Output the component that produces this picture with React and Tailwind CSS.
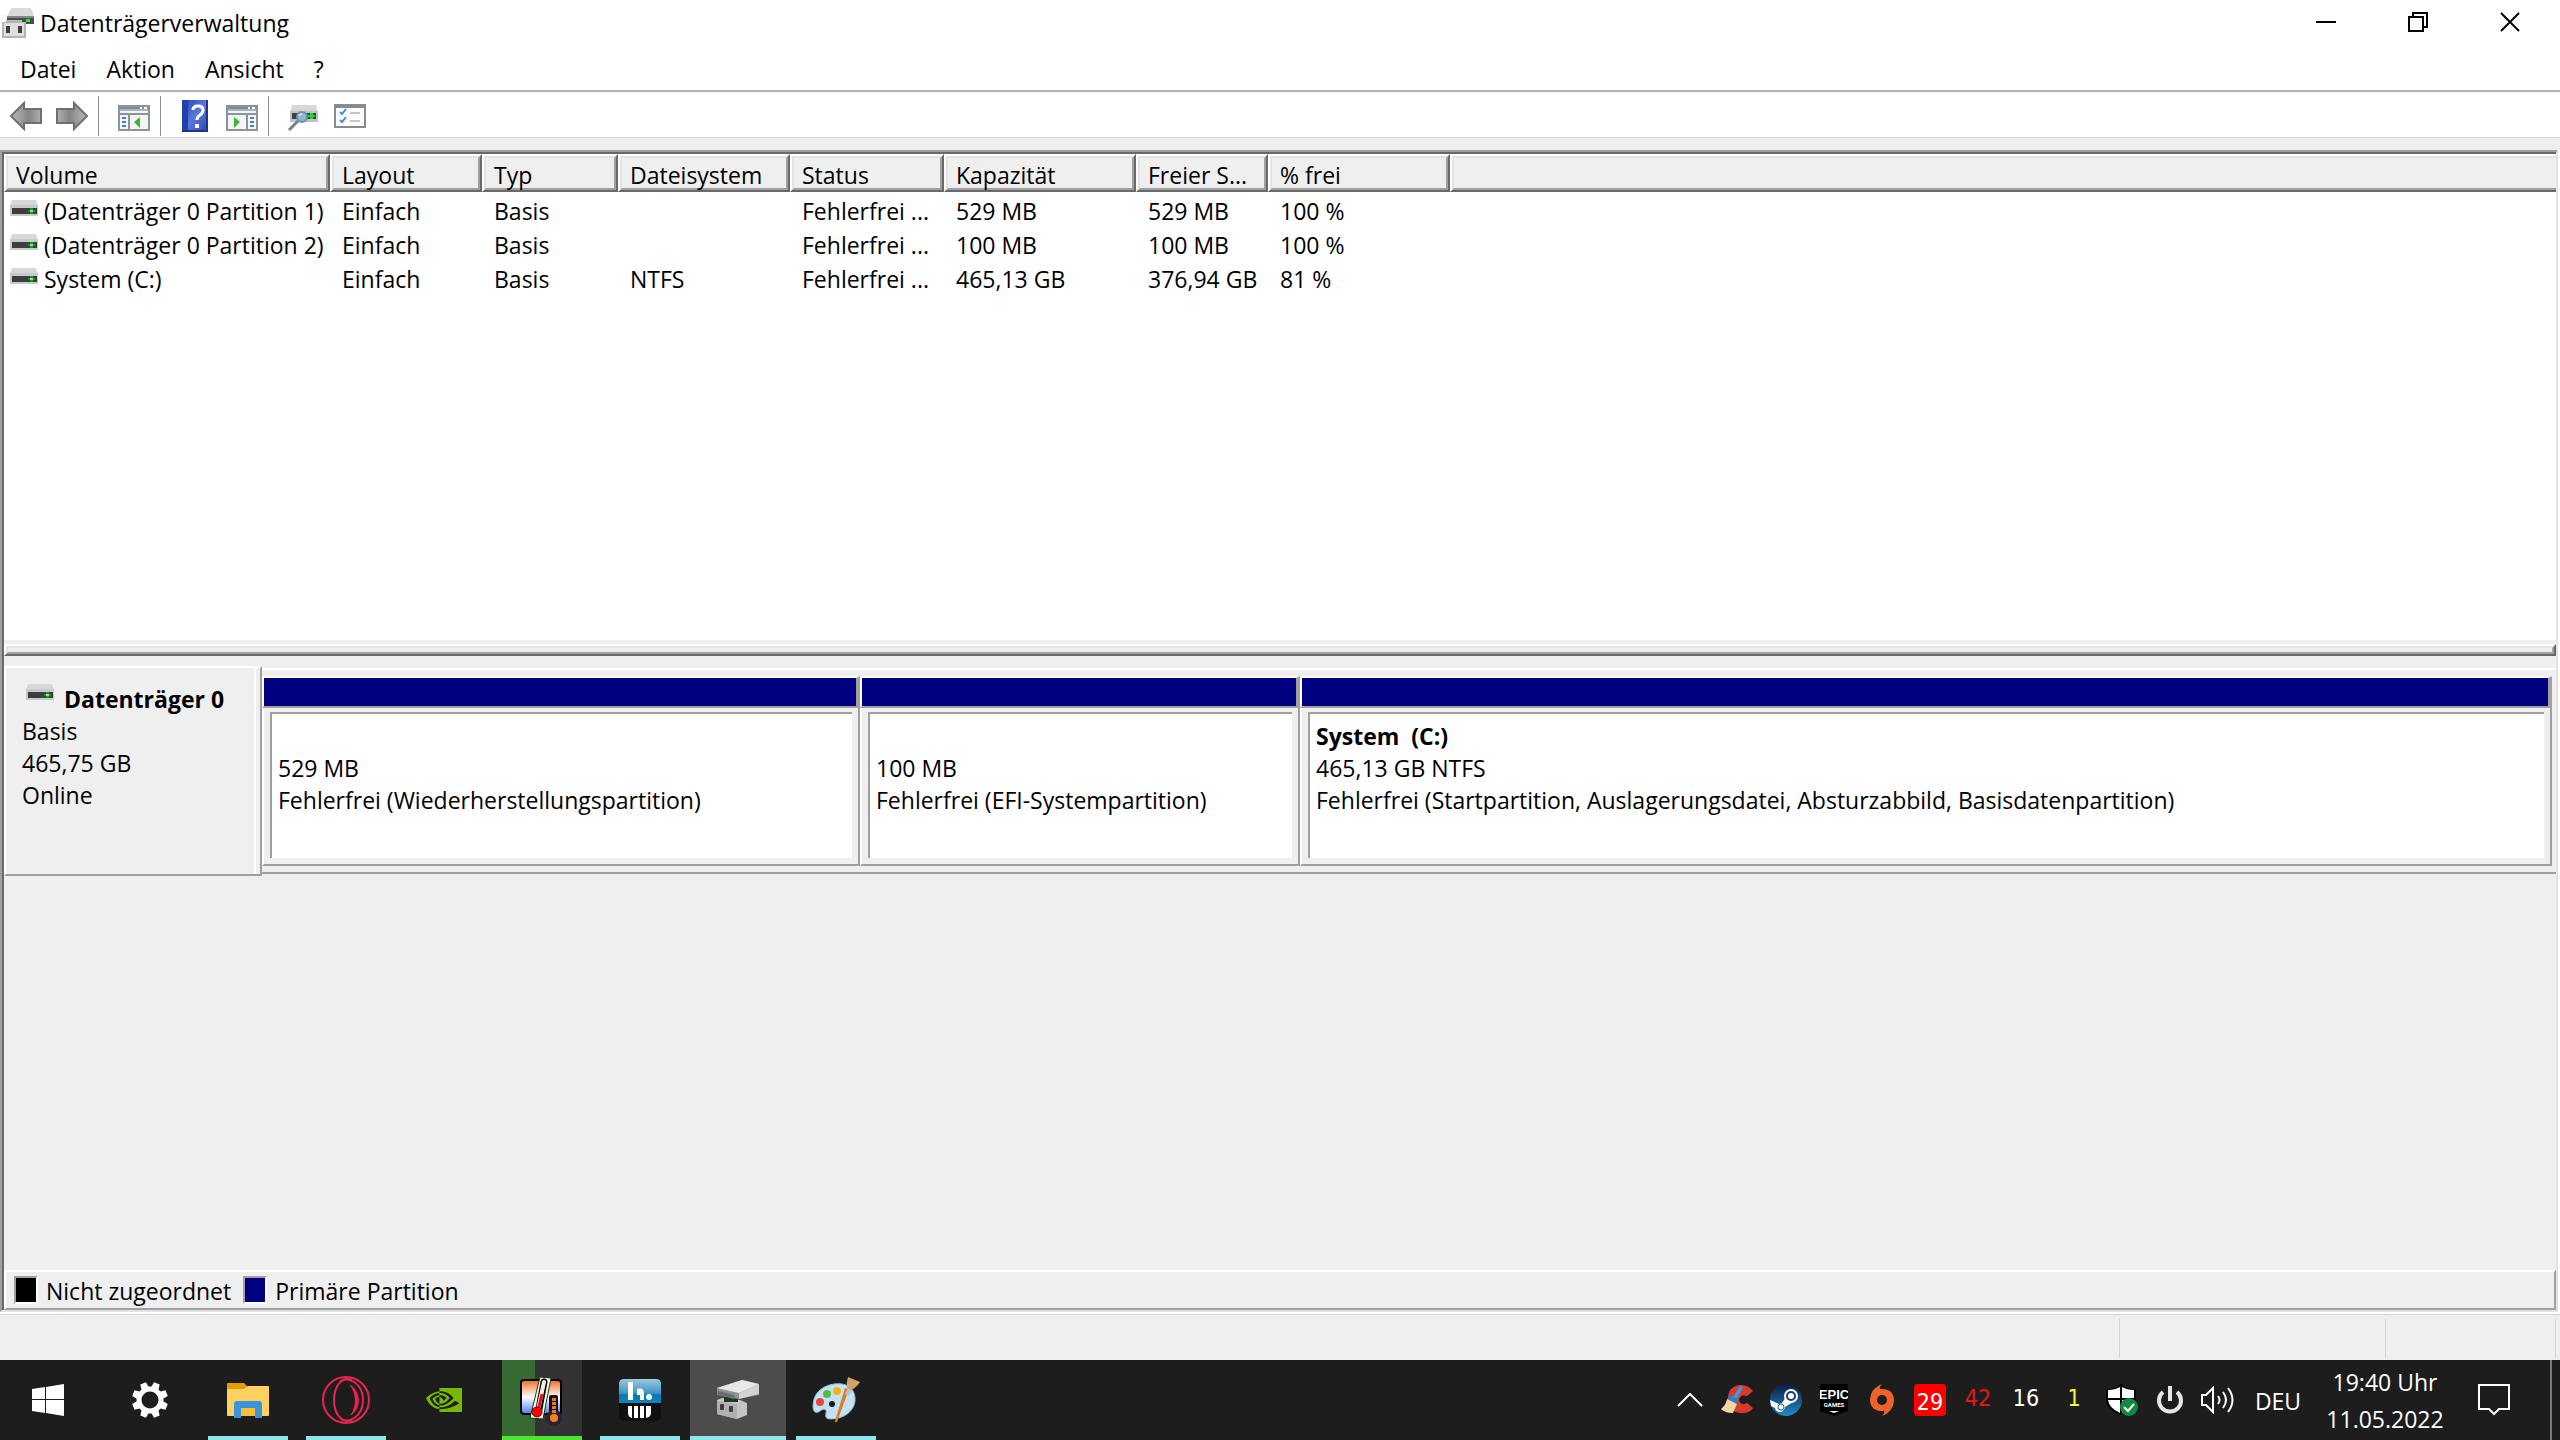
import React from 'react';
import { SiNvidia } from 'react-icons/si';

const columns = [
  { key: 'volume', label: 'Volume', width: 'w-[326px]' },
  { key: 'layout', label: 'Layout', width: 'w-[152px]' },
  { key: 'type', label: 'Typ', width: 'w-[136px]' },
  { key: 'fs', label: 'Dateisystem', width: 'w-[172px]' },
  { key: 'status', label: 'Status', width: 'w-[154px]' },
  { key: 'capacity', label: 'Kapazität', width: 'w-[192px]' },
  { key: 'free', label: 'Freier S...', width: 'w-[132px]' },
  { key: 'percent', label: '% frei', width: 'w-[182px]' },
  { key: 'rest', label: '', width: '' },
];

const volumes = [
  { volume: '(Datenträger 0 Partition 1)', layout: 'Einfach', type: 'Basis', fs: '', status: 'Fehlerfrei ...', capacity: '529 MB', free: '529 MB', percent: '100 %' },
  { volume: '(Datenträger 0 Partition 2)', layout: 'Einfach', type: 'Basis', fs: '', status: 'Fehlerfrei ...', capacity: '100 MB', free: '100 MB', percent: '100 %' },
  { volume: 'System (C:)', layout: 'Einfach', type: 'Basis', fs: 'NTFS', status: 'Fehlerfrei ...', capacity: '465,13 GB', free: '376,94 GB', percent: '81 %' },
];

const partitions = [
  { name: '', size: '529 MB', state: 'Fehlerfrei (Wiederherstellungspartition)' },
  { name: '', size: '100 MB', state: 'Fehlerfrei (EFI-Systempartition)' },
  { name: 'System  (C:)', size: '465,13 GB NTFS', state: 'Fehlerfrei (Startpartition, Auslagerungsdatei, Absturzabbild, Basisdatenpartition)' },
];

/* ---------- window icons ---------- */

const DriveIcon = () => (
  <svg width="28" height="22" viewBox="0 0 28 22" className="shrink-0">
    <path d="M2 0h24l2 6H0z" fill="#d6d8db" />
    <rect y="5" width="28" height="11" fill="#c6c9cd" />
    <rect x="2" y="8" width="25" height="6" fill="#3b3d3f" />
    <path d="M20 8h3v2h2v2h-2v2h-3v-2h-2v-2h2z" fill="#2f8a35" />
    <rect x="20" y="10" width="3" height="2" fill="#5cff5c" />
  </svg>
);

const AppIcon = () => (
  <svg width="32" height="31" viewBox="0 0 32 31" className="shrink-0">
    <path d="M9 0h20l3 8H5z" fill="#d9dadc" />
    <rect x="5" y="8" width="27" height="8" fill="#4a4d50" />
    <rect x="5" y="8" width="27" height="2" fill="#85888b" />
    <rect x="24" y="11" width="4" height="3" fill="#35e03a" />
    <path d="M0 14h4v-2h16v2h4v16H0z" fill="#b5b5b5" />
    <path d="M2 15h20v13H2z" fill="#dedede" />
    <rect x="4" y="18" width="4" height="7" fill="#3d3d3d" />
    <rect x="16" y="18" width="4" height="7" fill="#3d3d3d" />
  </svg>
);

const ArrowIcon = ({ flip }) => (
  <svg width="32" height="30" viewBox="0 0 32 30">
    <defs>
      <linearGradient id="arrowFill" x1="0" y1="0" x2="1" y2="0">
        <stop offset="0" stopColor="#b9b9b9" />
        <stop offset="0.6" stopColor="#858585" />
        <stop offset="1" stopColor="#b0b0b0" />
      </linearGradient>
    </defs>
    <path
      d="M1 15L14 2V8H31V22H14V28Z"
      fill="url(#arrowFill)"
      stroke="#707070"
      strokeWidth="2"
      transform={flip ? 'translate(32 0) scale(-1 1)' : undefined}
    />
  </svg>
);

const PaneIcon = ({ right }) => (
  <svg width="32" height="26" viewBox="0 0 32 26">
    <rect x="1" y="1" width="30" height="24" fill="#f4f4f4" stroke="#8a929a" strokeWidth="2" />
    <rect x="2" y="2" width="28" height="2" fill="#7d8b9b" />
    <path d="M2 5h28" stroke="#a9b3bf" strokeWidth="2" />
    <path d="M22 3h2M26 3h3" stroke="#fff" strokeWidth="2" />
    <path d="M1 9h30" stroke="#8a929a" strokeWidth="2" />
    {right ? (
      <>
        <path d="M21 9v16" stroke="#8a929a" strokeWidth="2" />
        <path d="M24 13h4M24 17h4M24 21h4" stroke="#3f83c4" strokeWidth="2" />
        <path d="M8 12l6 5-6 6z" fill="#3db52c" />
      </>
    ) : (
      <>
        <path d="M11 9v16" stroke="#8a929a" strokeWidth="2" />
        <path d="M4 13h4M4 17h4M4 21h4" stroke="#3f83c4" strokeWidth="2" />
        <path d="M22 12l-6 5 6 6z" fill="#3db52c" />
      </>
    )}
  </svg>
);

const HelpIcon = () => (
  <svg width="26" height="32" viewBox="0 0 26 32">
    <defs>
      <linearGradient id="helpFill" x1="0" y1="0" x2="1" y2="1">
        <stop offset="0" stopColor="#2444b8" />
        <stop offset="0.5" stopColor="#5877e0" />
        <stop offset="1" stopColor="#2b46a6" />
      </linearGradient>
    </defs>
    <rect width="26" height="32" fill="url(#helpFill)" />
    <rect width="6" height="32" fill="#2340a8" />
    <path d="M0 31h26M25 0v32" stroke="#203680" strokeWidth="2" />
    <path d="M11 10q0-4 5-4t5 4q0 3-3 5t-3 5" fill="none" stroke="#fff" strokeWidth="3" />
    <rect x="13" y="24" width="4" height="4" fill="#fff" />
  </svg>
);

const RescanIcon = () => (
  <svg width="30" height="26" viewBox="0 0 30 26">
    <path d="M4 0h24l2 8H2z" fill="#d4d6d8" />
    <rect x="2" y="6" width="28" height="11" fill="#bfc2c5" />
    <rect x="4" y="8" width="24" height="6" fill="#3a4148" />
    <path d="M22 8h3v2h2v2h-2v2h-3v-2h-2v-2h2z" fill="#24d52c" />
    <path d="M1 25L10 16" stroke="#75808a" strokeWidth="3" />
    <circle cx="14" cy="12" r="5" fill="#8db4cc" stroke="#7094ab" strokeWidth="2" />
    <path d="M11 11q1-2 3-2" stroke="#c8e0ee" strokeWidth="2" fill="none" />
  </svg>
);

const ChecklistIcon = () => (
  <svg width="32" height="24" viewBox="0 0 32 24">
    <rect x="1" y="1" width="30" height="22" fill="#fbfbfb" stroke="#868b90" strokeWidth="2" />
    <path d="M1 3h30" stroke="#868b90" strokeWidth="2" />
    <path d="M6 8l2 2 4-5M6 16l2 2 4-5" stroke="#3a8fd9" strokeWidth="2" fill="none" />
    <path d="M16 9h10M16 17h10" stroke="#c6c6c6" strokeWidth="2" />
  </svg>
);

/* ---------- taskbar icons ---------- */

const StartIcon = () => (
  <svg width="32" height="32" viewBox="0 0 32 32" fill="#fff">
    <path d="M0 5L13 3V15H0zM14 3L32 0V15H14zM0 16H13V29L0 27zM14 16H32V32L14 29z" />
  </svg>
);

const GearIcon = () => (
  <svg width="36" height="36" viewBox="-18 -18 36 36">
    <circle r="11" fill="none" stroke="#fff" strokeWidth="5" />
    {[22.5, 67.5, 112.5, 157.5, 202.5, 247.5, 292.5, 337.5].map((a) => (
      <path key={a} d="M-3-18h6l1 6h-8z" fill="#fff" transform={`rotate(${a})`} />
    ))}
  </svg>
);

const FolderIcon = () => (
  <svg width="42" height="35" viewBox="0 0 42 35">
    <path d="M0 1q0-1 1-1h16l4 4v6H0z" fill="#e09c0b" />
    <path d="M0 6h17l4-3h20q1 0 1 1v28q0 1-1 1H1q-1 0-1-1z" fill="#fdd261" />
    <path d="M12 24h18v9H12z" fill="#f6bf38" />
    <path d="M7 35V21q0-3 3-3h22q3 0 3 3v14h-7V25H14v10z" fill="#3a94dc" />
  </svg>
);

const OperaIcon = () => (
  <svg width="48" height="48" viewBox="0 0 48 48" fill="none" stroke="#e8254f">
    <circle cx="24" cy="24" r="23" strokeWidth="2" />
    <path d="M30 4C19 0 12 11 12 24s7 24 18 20" strokeWidth="2" />
    <path d="M19 5C26 0 41 7 41 24S26 48 19 43" strokeWidth="2" />
    <path d="M28 9c11 7 11 23 1 30c6-8 6-22-1-30z" fill="#e8254f" strokeWidth="1" />
  </svg>
);

const ThermometerIcon = () => (
  <svg width="44" height="50" viewBox="0 0 44 50">
    <defs>
      <linearGradient id="heat" x1="0" y1="0" x2="0" y2="1">
        <stop offset="0" stopColor="#f26a1b" />
        <stop offset="0.5" stopColor="#fff" />
        <stop offset="1" stopColor="#4a7be8" />
      </linearGradient>
    </defs>
    <rect x="1" y="4" width="40" height="34" rx="3" fill="url(#heat)" stroke="#000" strokeWidth="2" />
    <path d="M20 1L31 2L23 43L10 42z" fill="#f4ffe8" stroke="#153d12" strokeWidth="1" />
    <path d="M24 6L19 33" stroke="#000" strokeWidth="7" strokeLinecap="round" strokeDasharray="2 1" />
    <path d="M24 6L18 34" stroke="#ffe9e9" strokeWidth="4" strokeLinecap="round" />
    <path d="M22 18L18 35" stroke="#e81123" strokeWidth="3" />
    <circle cx="17" cy="36" r="5" fill="#f00" stroke="#7b0000" strokeWidth="1" />
    <rect x="29" y="19" width="9" height="24" rx="2" fill="#15101f" />
    <circle cx="34" cy="42" r="8" fill="#2b2038" />
    <path d="M34 22v20" stroke="#f07a14" strokeWidth="4" strokeDasharray="3 1" />
    <circle cx="34" cy="42" r="4" fill="#f58216" />
  </svg>
);

const MonitorIcon = () => (
  <svg width="42" height="42" viewBox="0 0 42 42">
    <defs>
      <linearGradient id="monTop" x1="0" y1="0" x2="0" y2="1">
        <stop offset="0" stopColor="#9cc9e0" />
        <stop offset="0.6" stopColor="#3c94be" />
        <stop offset="0.65" stopColor="#0b7ab0" />
        <stop offset="1" stopColor="#0b84bd" />
      </linearGradient>
    </defs>
    <rect width="42" height="42" rx="5" fill="#111" />
    <path d="M0 24V5q0-5 5-5h32q5 0 5 5v19z" fill="url(#monTop)" />
    <path d="M9 3h5v18H9zM18 10q7-2 7 5v6h-4v-5h-3z" fill="#fff" />
    <circle cx="30" cy="18" r="3" fill="#fff" />
    <path d="M9 27h4v12q-4-1-4-5zM15 27h4v12h-4zM21 27h4v12h-4zM27 27h5v7q0 4-5 5z" fill="#fff" />
  </svg>
);

const DiskToolIcon = () => (
  <svg width="44" height="40" viewBox="0 0 44 40">
    <path d="M1 20l5-2 18 2 7 3v12l-10 4-20-5z" fill="#c4c4c6" />
    <path d="M1 21l20 3v15L1 34z" fill="#b0b0b3" />
    <path d="M8 16h14v6H8z" fill="#26312a" />
    <path d="M1 8L26 0l17 4v11l-21 4L1 15z" fill="#8f8f92" />
    <path d="M1 8L26 0l17 4-20 9z" fill="#e8e8ea" />
    <path d="M23 13l20-9v10l-20 5z" fill="#d2d2d5" />
    <path d="M2 11l16 4v4L2 15z" fill="#6a6d6c" />
    <rect x="4" y="24" width="4" height="6" rx="1" fill="#3e3e40" />
    <rect x="13" y="26" width="4" height="6" rx="1" fill="#3e3e40" />
    <path d="M15 16h4v2h-4z" fill="#3aa33e" />
  </svg>
);

const PaintIcon = () => (
  <svg width="48" height="46" viewBox="0 0 48 46">
    <path
      d="M22 7C36 5 44 13 43 24C42 34 32 42 19 42C14 42 13 40 14 36C15 32 12 31 8 34C4 37 1 35 1 29C1 17 9 9 22 7z"
      fill="#c3e2f1"
      stroke="#8cb8d2"
      strokeWidth="1"
    />
    <circle cx="20" cy="27" r="3" fill="#1d1d1d" />
    <circle cx="8" cy="25" r="4" fill="#e14a42" />
    <circle cx="15" cy="17" r="4" fill="#58b947" />
    <circle cx="25" cy="14" r="4" fill="#f6b21b" />
    <path d="M37 12L25 45q-2 1-2-1L33 11z" fill="#e07b24" />
    <path d="M33 17l3-6 4 2-3 6z" fill="#b8c3ca" />
    <path d="M36 0l12 5q-4 6-9 8l-4-2q-1-5 1-11z" fill="#cfa36a" />
  </svg>
);

const CleanerIcon = () => (
  <svg width="34" height="32" viewBox="0 0 34 32">
    <path d="M32 7Q27 0 18 1Q7 3 7 15Q8 28 19 29Q28 30 32 24L26 19Q20 22 18 16Q19 10 26 12z" fill="#d83a2e" />
    <path d="M19 2l3 1-6 12-4-2z" fill="#3c9ade" />
    <path d="M9 11l9 5-2 4-10-5z" fill="#2f7fc4" />
    <path d="M6 15l10 5-4 9Q4 29 0 25Q5 21 6 15z" fill="#f2d7a0" />
  </svg>
);

const SteamIcon = () => (
  <svg width="32" height="32" viewBox="0 0 32 32">
    <defs>
      <linearGradient id="steamFill" x1="0" y1="0" x2="0" y2="1">
        <stop offset="0" stopColor="#0e1b47" />
        <stop offset="1" stopColor="#1d8cc4" />
      </linearGradient>
    </defs>
    <circle cx="16" cy="16" r="16" fill="url(#steamFill)" />
    <path d="M0 16l9 4 3-1 4-6 7 5-8 5q-1 5-5 5t-5-4l-4-2z" fill="#fff" />
    <circle cx="21" cy="12" r="7" fill="#fff" />
    <circle cx="21" cy="12" r="4" fill="none" stroke="#163a72" strokeWidth="2" />
    <circle cx="11" cy="23" r="3" fill="none" stroke="#1b609c" strokeWidth="1" />
  </svg>
);

const EpicIcon = () => (
  <svg width="28" height="32" viewBox="0 0 28 32">
    <path d="M2 0h24q2 0 2 2v25l-14 5-14-5V2q0-2 2-2z" fill="#000" />
    <text x="14" y="15" textAnchor="middle" fontFamily="Liberation Sans Narrow, sans-serif" fontWeight="700" fontSize="13" fill="#fff">EPIC</text>
    <text x="14" y="23" textAnchor="middle" fontFamily="Roboto, sans-serif" fontWeight="700" fontSize="6" fill="#fff">GAMES</text>
    <path d="M9 27h10l-5 2z" fill="#fff" />
  </svg>
);

const OriginIcon = () => (
  <svg width="24" height="32" viewBox="0 0 24 32">
    <path
      d="M12 0Q9 3 10 5Q24 4 24 17Q23 28 12 32Q15 29 14 27Q0 28 0 15Q1 4 12 0z"
      fill="#f0622b"
    />
    <circle cx="12" cy="16" r="5" fill="#1d1d1d" />
  </svg>
);

const ShieldIcon = () => (
  <svg width="32" height="32" viewBox="0 0 32 32">
    <path d="M15 0q5 5 15 5v10q0 11-15 16Q0 26 0 15V5Q10 5 15 0z" fill="#000" />
    <path d="M14 3v11H2V6q7 0 12-3zM16 3v11h12V6q-7 0-12-3zM14 16v13Q3 24 2 16zM16 16v13q11-5 12-13z" fill="#fff" />
    <circle cx="23" cy="23" r="9" fill="#10893e" />
    <path d="M18 23l4 4 6-7" stroke="#fff" strokeWidth="2" fill="none" />
  </svg>
);

const PowerIcon = () => (
  <svg width="28" height="30" viewBox="0 0 28 30" fill="none" stroke="#e6e6e6" strokeWidth="4">
    <path d="M7 7a11 11 0 1 0 14 0" />
    <path d="M14 1v15" />
  </svg>
);

const SpeakerIcon = () => (
  <svg width="34" height="28" viewBox="0 0 34 28" fill="none" stroke="#fff" strokeWidth="2">
    <path d="M1 9h4l7-7v24l-7-7H1z" />
    <path d="M17 10q3 4 0 8M22 6q6 8 0 16M27 2q9 12 0 24" />
  </svg>
);

/* ---------- window ---------- */

const ToolButton = ({ label, className, children }) => (
  <button type="button" aria-label={label} className={`flex items-center justify-center ${className}`}>
    {children}
  </button>
);

const ToolSeparator = () => <div className="h-10 w-px bg-[#8d8d8d]" />;

const TitleBar = () => (
  <header className="flex h-[50px] items-start justify-between pl-[2px] pr-1">
    <div className="flex items-center gap-[6px] pt-[6px]">
      <AppIcon />
      <h1 className="leading-[34px]">Datenträgerverwaltung</h1>
    </div>
    <div className="flex">
      <button type="button" aria-label="Minimieren" className="flex h-11 w-[92px] items-center justify-center">
        <svg width="20" height="20" viewBox="0 0 20 20"><path d="M0 10h20" stroke="#000" strokeWidth="2" /></svg>
      </button>
      <button type="button" aria-label="Verkleinern" className="flex h-11 w-[92px] items-center justify-center">
        <svg width="20" height="20" viewBox="0 0 20 20" fill="none" stroke="#000" strokeWidth="2">
          <path d="M1 5h14v14H1zM5 5V1h14v14h-4" />
        </svg>
      </button>
      <button type="button" aria-label="Schließen" className="flex h-11 w-[92px] items-center justify-center">
        <svg width="20" height="20" viewBox="0 0 20 20" stroke="#000" strokeWidth="2"><path d="M1 1l18 18M19 1L1 19" /></svg>
      </button>
    </div>
  </header>
);

const MenuBar = () => (
  <nav className="box-content flex h-10 items-start gap-[30px] border-b-2 border-[#b2b2b2] pl-5">
    {['Datei', 'Aktion', 'Ansicht', '?'].map((item) => (
      <button key={item} type="button" className="leading-[38px]">{item}</button>
    ))}
  </nav>
);

const Toolbar = () => (
  <div className="flex h-[46px] items-center border-b border-[#d9d9d9] border-t-2 border-t-[#f5f7f9] pl-[10px]">
    <ToolButton label="Zurück" className="mr-[14px]"><ArrowIcon /></ToolButton>
    <ToolButton label="Vorwärts" className="mr-[10px]"><ArrowIcon flip /></ToolButton>
    <ToolSeparator />
    <ToolButton label="Konsolenstruktur" className="ml-[19px] mr-[10px] pt-1"><PaneIcon /></ToolButton>
    <ToolSeparator />
    <ToolButton label="Hilfe" className="ml-[21px] mr-[18px]"><HelpIcon /></ToolButton>
    <ToolButton label="Aktionsbereich" className="mr-[10px] pt-1"><PaneIcon right /></ToolButton>
    <ToolSeparator />
    <ToolButton label="Datenträger neu einlesen" className="ml-[19px] mr-4 pt-1"><RescanIcon /></ToolButton>
    <ToolButton label="Einstellungen" className=""><ChecklistIcon /></ToolButton>
  </div>
);

const VolumeTable = () => (
  <table className="w-full table-fixed border-collapse whitespace-nowrap">
    <colgroup>
      {columns.map((col) => <col key={col.key} className={col.width} />)}
    </colgroup>
    <thead>
      <tr>
        {columns.map((col) => (
          <th key={col.key} className="p-0 pb-[2px] text-left font-normal">
            <div className={`border-t-2 border-b-2 border-t-white border-b-[#696969] ${col.label ? 'border-l-2 border-r-2 border-l-white border-r-[#696969]' : 'border-l-2 border-l-white'}`}>
              <div className={`h-[34px] border-t-2 border-b-2 border-l-2 border-t-[#e3e3e3] border-b-[#a0a0a0] border-l-[#e3e3e3] bg-[#efefef] pl-2 pt-1 leading-[26px] ${col.label ? 'border-r-2 border-r-[#a0a0a0]' : ''}`}>
                {col.label}
              </div>
            </div>
          </th>
        ))}
      </tr>
    </thead>
    <tbody>
      {volumes.map((vol) => (
        <tr key={vol.volume} className="h-[34px]">
          {columns.map((col) => (
            <td key={col.key} className="p-0 leading-[34px]">
              {col.key === 'volume' ? (
                <div className="flex items-center gap-[6px] pl-[6px]">
                  <DriveIcon />
                  <span>{vol.volume}</span>
                </div>
              ) : (
                <div className="pl-3">{vol[col.key]}</div>
              )}
            </td>
          ))}
        </tr>
      ))}
    </tbody>
  </table>
);

const Splitter = () => (
  <div className="border-t-4 border-[#efefef]">
    <div className="border-2 border-t-white border-l-white border-r-[#696969] border-b-[#696969]">
      <div className="h-2 border-2 border-t-[#e3e3e3] border-l-[#e3e3e3] border-r-[#a0a0a0] border-b-[#a0a0a0] bg-[#efefef]" />
    </div>
  </div>
);

const Partition = ({ part }) => (
  <div className="min-w-0 whitespace-pre">
    <div className="h-8 border-t-2 border-r-4 border-b-2 border-l-2 border-t-white border-r-[#a0a0a0] border-b-[#a0a0a0] border-l-white bg-[#000080]" />
    <div className="border-r-2 border-b-2 border-l-2 border-r-[#a0a0a0] border-b-[#a0a0a0] border-l-white px-[6px] pt-1 pb-[6px]">
      <div className="h-[146px] overflow-hidden border-t-2 border-l-2 border-[#a0a0a0] bg-white pt-[6px] pl-[6px] leading-8">
        <p className="h-8 font-bold">{part.name}</p>
        <p>{part.size}</p>
        <p>{part.state}</p>
      </div>
    </div>
  </div>
);

const DiskRow = () => (
  <section className="flex items-start">
    <div className="h-[210px] w-[258px] shrink-0 border-2 border-t-white border-r-[#a0a0a0] border-b-[#a0a0a0] border-l-white pr-1">
      <div className="h-full border-r-2 border-white pt-[15px] pl-4 leading-8">
        <div className="flex items-center gap-[10px] pl-1">
          <div className="-mt-2"><DriveIcon /></div>
          <h2 className="font-bold">Datenträger 0</h2>
        </div>
        <p>Basis</p>
        <p>465,75 GB</p>
        <p>Online</p>
      </div>
    </div>
    <div className="mt-[2px] grid min-w-0 flex-1 grid-cols-[598fr_440fr_1252fr] border-t-2 border-b-2 border-t-white border-b-[#a0a0a0] py-[6px] pr-1">
      {partitions.map((part) => <Partition key={part.size} part={part} />)}
    </div>
  </section>
);

const Swatch = ({ color, label }) => (
  <div className="flex items-center gap-2">
    <span className={`h-7 w-6 border-2 border-t-[#a0a0a0] border-l-[#a0a0a0] border-r-white border-b-white ${color}`} />
    <span className="pt-[2px]">{label}</span>
  </div>
);

const Legend = () => (
  <footer className="flex h-10 items-center gap-3 border-2 border-t-white border-l-white border-r-[#a0a0a0] border-b-[#a0a0a0] pl-2">
    <Swatch color="bg-black" label="Nicht zugeordnet" />
    <Swatch color="bg-[#000080]" label="Primäre Partition" />
  </footer>
);

const StatusBar = () => (
  <div className="flex h-[46px] justify-end border-t border-[#d4d4d4] bg-[#efefef] pt-1 pr-1 pb-[2px]">
    <div className="w-[266px] border-l border-[#d4d4d4]" />
    <div className="w-[171px] border-x border-[#d4d4d4]" />
  </div>
);

/* ---------- taskbar ---------- */

const TaskButton = ({ label, open, active, children }) => (
  <button type="button" aria-label={label} className={`flex h-20 w-24 flex-col items-center ${active ? 'bg-[#4c4c4c]' : ''}`}>
    <span className="flex flex-1 items-center justify-center">{children}</span>
    <span className={`-mt-1 h-1 ${active ? 'w-full' : 'w-20'} ${open || active ? 'bg-[#8ee6ea]' : ''}`} />
  </button>
);

const TrayItem = ({ label, children }) => (
  <button type="button" aria-label={label} className="flex w-12 items-center justify-center font-['DejaVu_Sans_Condensed','DejaVu_Sans',sans-serif] text-[23px]">
    {children}
  </button>
);

const Taskbar = () => (
  <div className="flex h-20 justify-between bg-[#1d1d1d] text-white">
    <div className="flex gap-[2px]">
      <div className="mr-1"><TaskButton label="Start"><StartIcon /></TaskButton></div>
      <TaskButton label="Einstellungen"><GearIcon /></TaskButton>
      <TaskButton label="Explorer" open><FolderIcon /></TaskButton>
      <TaskButton label="Opera GX" open><OperaIcon /></TaskButton>
      <TaskButton label="NVIDIA"><SiNvidia size={36} color="#76b900" /></TaskButton>
      <button type="button" aria-label="Core Temp" className="mx-2 flex h-20 w-20 items-center justify-center border-b-4 border-[#50e432] bg-linear-to-r from-[#386a34] from-[41%] to-[#333333] to-[41%] pt-[6px]">
        <ThermometerIcon />
      </button>
      <TaskButton label="HWMonitor" open><MonitorIcon /></TaskButton>
      <TaskButton label="Datenträgerverwaltung" active><DiskToolIcon /></TaskButton>
      <TaskButton label="Paint" open><PaintIcon /></TaskButton>
    </div>
    <div className="flex">
      <TrayItem label="Ausgeblendete Symbole">
        <svg width="26" height="14" viewBox="0 0 26 14" fill="none" stroke="#fff" strokeWidth="2"><path d="M1 13L13 1l12 12" /></svg>
      </TrayItem>
      <TrayItem label="CCleaner"><CleanerIcon /></TrayItem>
      <TrayItem label="Steam"><SteamIcon /></TrayItem>
      <TrayItem label="Epic Games"><EpicIcon /></TrayItem>
      <TrayItem label="Origin"><OriginIcon /></TrayItem>
      <TrayItem label="29"><span className="h-8 w-8 rounded-sm bg-[#ff0000] leading-9">29</span></TrayItem>
      <TrayItem label="42"><span className="-mt-1 text-[#e01818]">42</span></TrayItem>
      <TrayItem label="16"><span className="-mt-1">16</span></TrayItem>
      <TrayItem label="1"><span className="-mt-1 text-[#f5f53a]">1</span></TrayItem>
      <TrayItem label="Windows-Sicherheit"><ShieldIcon /></TrayItem>
      <TrayItem label="Energie"><PowerIcon /></TrayItem>
      <TrayItem label="Lautstärke"><SpeakerIcon /></TrayItem>
      <button type="button" className="w-[72px] pt-[2px] text-center">DEU</button>
      <button type="button" className="w-[142px] pt-[2px] text-center leading-[37px]">
        <span className="block">19:40 Uhr</span>
        <span className="block">11.05.2022</span>
      </button>
      <button type="button" aria-label="Info-Center" className="mr-10 ml-[22px] flex items-center">
        <svg width="32" height="32" viewBox="0 0 32 32" fill="none" stroke="#fff" strokeWidth="2">
          <path d="M1 1h30v24H21l-5 5-5-5H1z" />
        </svg>
      </button>
      <button type="button" aria-label="Desktop anzeigen" className="w-[10px] border-l-2 border-[#7a7a7a]" />
    </div>
  </div>
);

export default function App() {
  return (
    <div className="flex min-h-screen flex-col bg-white font-['Open_Sans','Noto_Sans',sans-serif] text-[23px] text-black">
      <TitleBar />
      <MenuBar />
      <Toolbar />
      <div className="h-3 bg-[#efefef]" />
      <main className="mr-[2px] mb-[2px] flex flex-1 flex-col border-2 border-t-[#a0a0a0] border-l-[#a0a0a0] border-r-[#e3e3e3] border-b-[#e3e3e3]">
        <div className="flex flex-1 flex-col border-t-2 border-l-2 border-[#696969] bg-[#efefef]">
          <div className="min-h-[486px] bg-white">
            <VolumeTable />
          </div>
          <Splitter />
          <div className="flex-1 pt-[10px]">
            <DiskRow />
          </div>
          <Legend />
        </div>
      </main>
      <StatusBar />
      <Taskbar />
    </div>
  );
}
